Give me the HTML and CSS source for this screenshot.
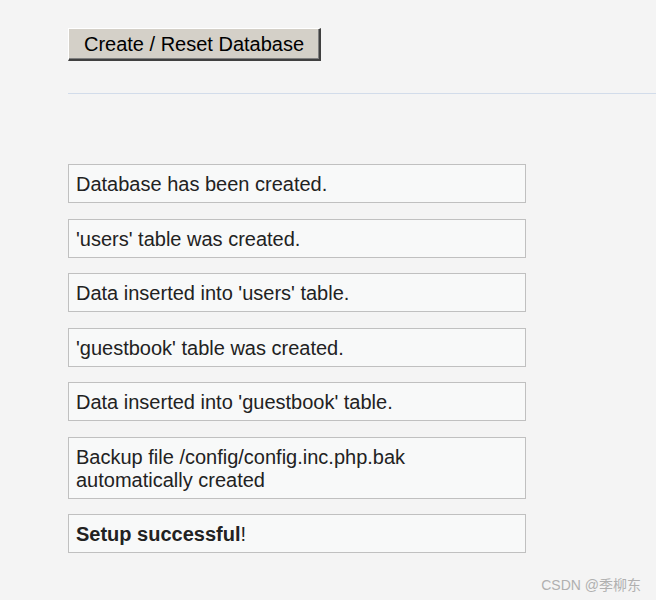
FILE: index.html
```html
<!DOCTYPE html>
<html>
<head>
<meta charset="utf-8">
<link rel="stylesheet" href="styles.css">
</head>
<body>
<div class="page">
  <form class="form">
    <button type="button" class="btn">Create / Reset Database</button>
  </form>
  <div class="rule"></div>
  <div class="messages">
    <div class="msg">Database has been created.</div>
    <div class="msg">'users' table was created.</div>
    <div class="msg">Data inserted into 'users' table.</div>
    <div class="msg">'guestbook' table was created.</div>
    <div class="msg">Data inserted into 'guestbook' table.</div>
    <div class="msg">Backup file /config/config.inc.php.bak<br>automatically created</div>
    <div class="msg"><strong>Setup successful</strong>!</div>
  </div>
</div>
<div class="watermark">CSDN @季柳东</div>
</body>
</html>
```
FILE: styles.css
```css
html, body {
  margin: 0;
  padding: 0;
  background: #f4f4f4;
  height: 100%;
}
body {
  font-family: "Liberation Sans", Arial, sans-serif;
  color: #222;
  overflow: hidden;
}
.page {
  padding: 28px 0 0 68px;
}
.form {
  margin: 0;
}
.btn {
  font-family: "Liberation Sans", Arial, sans-serif;
  font-size: 20px;
  line-height: 23px;
  color: #000;
  background: #d4d0c8;
  width: 253px;
  height: 33px;
  padding: 0;
  border-style: solid;
  border-width: 1px 2px 2px 1px;
  border-color: #ffffff #404040 #404040 #ffffff;
  box-shadow: inset -1px -1px 0 #808080;
  display: block;
}
.rule {
  margin-top: 32px;
  height: 1px;
  background: #d2dcea;
}
.messages {
  margin-top: 70px;
  width: 458px;
  display: flex;
  flex-direction: column;
  gap: 15.5px;
}
.msg {
  background: #f8f9f9;
  border: 1px solid #c0c0c0;
  font-size: 20px;
  line-height: 23px;
  padding: 8px 7px 6px;
  color: #222;
}
.msg strong {
  font-weight: bold;
}
.watermark {
  position: absolute;
  right: 15px;
  top: 574px;
  font-family: "Liberation Sans", "Noto Sans CJK SC", sans-serif;
  font-size: 14px;
  color: #b0b0b0;
}
```
